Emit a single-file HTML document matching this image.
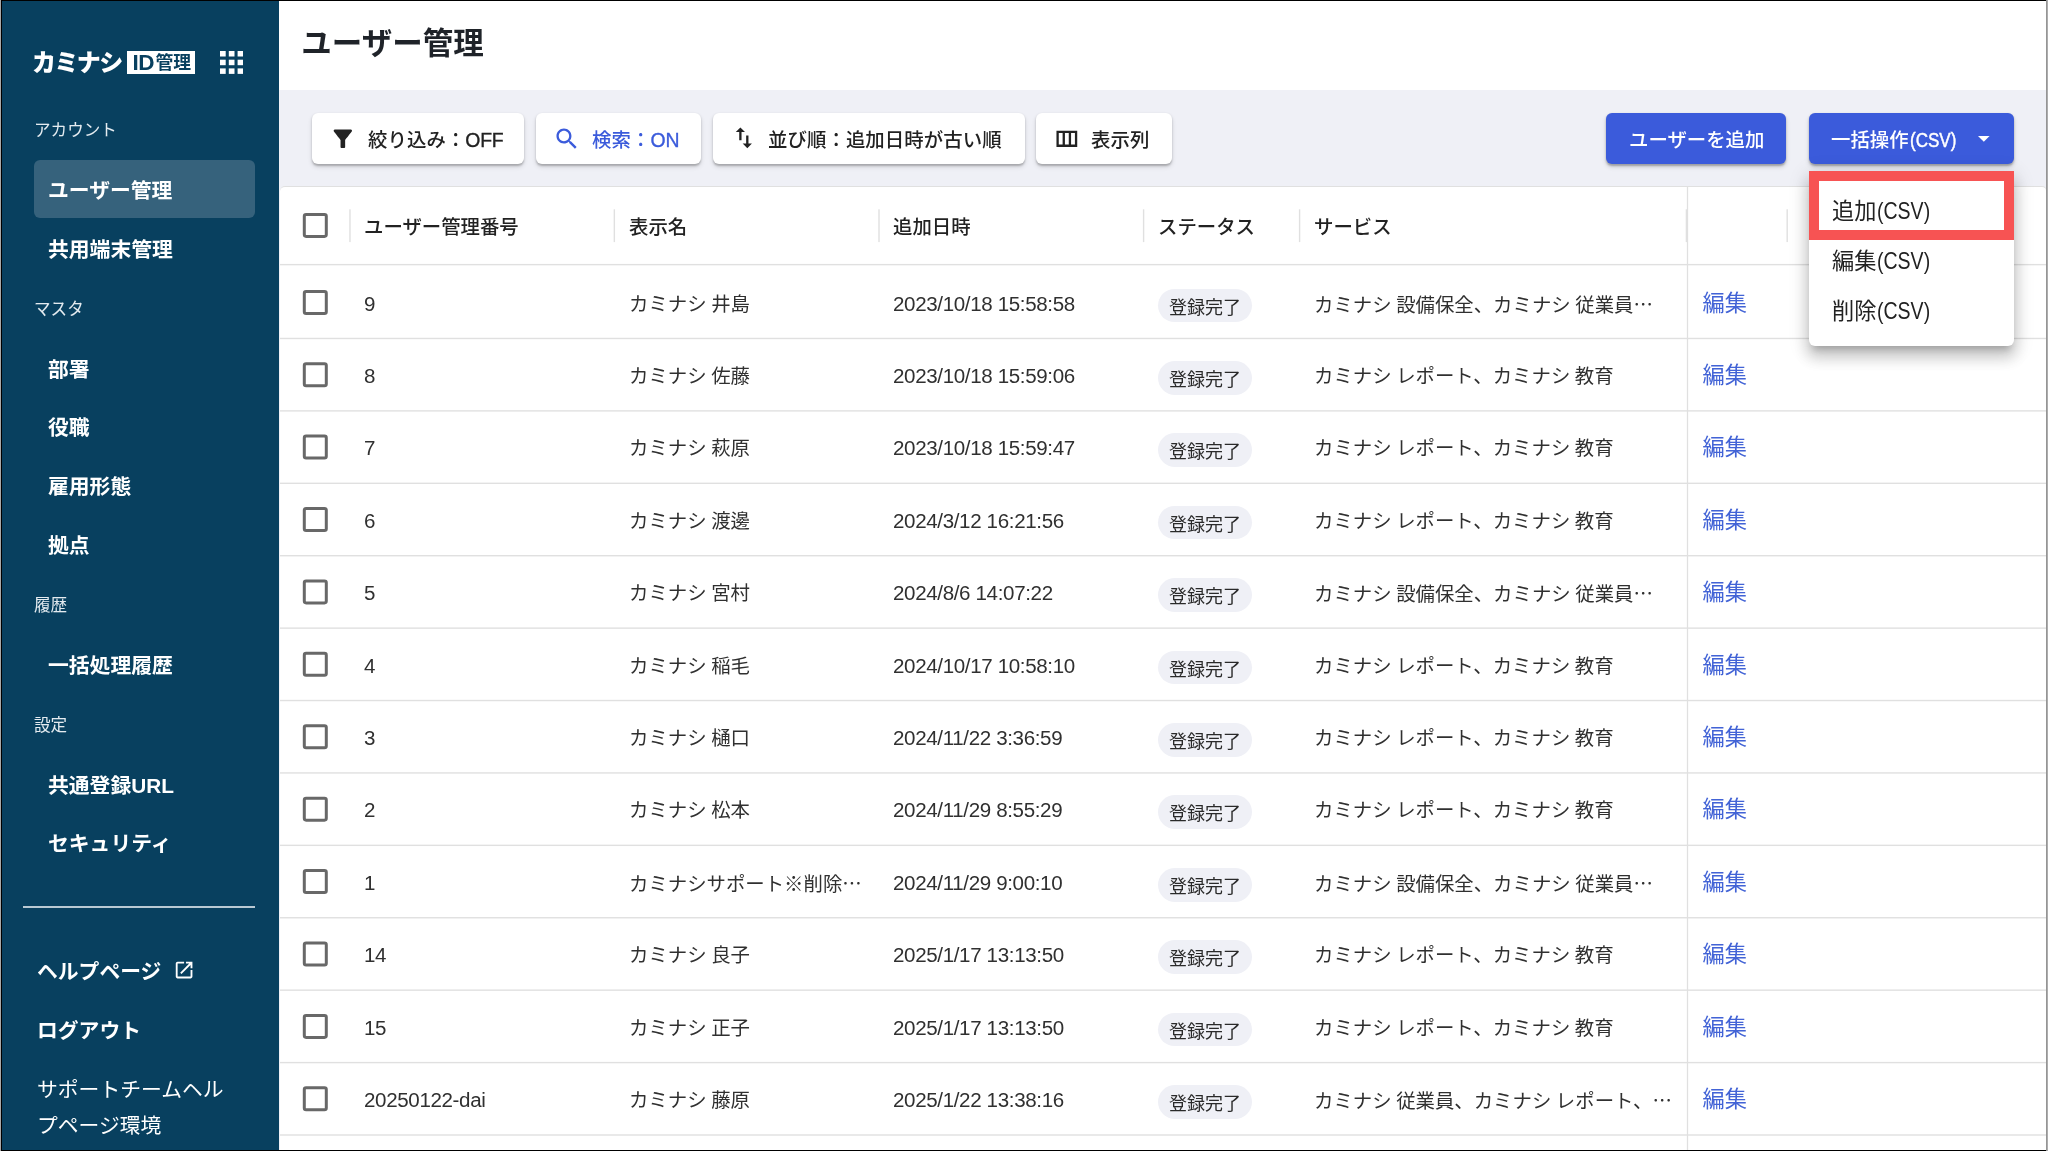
<!DOCTYPE html>
<html lang="ja">
<head>
<meta charset="utf-8">
<title>ユーザー管理</title>
<style>
*{box-sizing:border-box;margin:0;padding:0}
html,body{width:2048px;height:1151px;overflow:hidden;background:#fff}
body{will-change:transform;font-family:"Liberation Sans","Noto Sans CJK JP",sans-serif;color:#222;position:relative}
.abs{position:absolute}
.el{font-family:"Noto Sans CJK JP",sans-serif}
#side{position:absolute;left:0;top:0;width:279px;height:1151px;background:#08405f;color:#fff}
#side .sec{position:absolute;left:34px;font-size:16.6px;line-height:24px;color:#e4ebf0;white-space:nowrap}
#side .item{position:absolute;left:48px;font-size:20.8px;line-height:30px;font-weight:700;white-space:nowrap}
#side .sel{position:absolute;left:34px;top:160px;width:221px;height:58px;border-radius:6px;background:#36627c}
#side .bitem{position:absolute;left:37px;font-size:20.8px;line-height:36px;font-weight:500;white-space:nowrap}
#side .hr{position:absolute;left:23px;top:906px;width:232px;height:2px;background:#b9c9d3}
#main{position:absolute;left:279px;top:0;width:1769px;height:1151px;background:#fff}
#title{position:absolute;left:22.3px;top:21.4px;font-size:30.5px;line-height:44px;font-weight:700;color:#1f2329;white-space:nowrap}
#bar{position:absolute;left:0;top:90px;width:1769px;height:1061px;background:#eff0f6}
.btn{position:absolute;top:113px;height:50.5px;border-radius:6px;background:#fff;box-shadow:0 1.5px 2px rgba(0,0,0,.22),0 3px 5px rgba(0,0,0,.12);font-size:19.4px;line-height:50px;font-weight:500;color:#222;white-space:nowrap}
.btn span.t{position:absolute;top:1.5px;letter-spacing:.08px}
.btn svg{position:absolute}
.pbtn{position:absolute;top:113px;height:50.5px;border-radius:6px;background:#3b5bdb;box-shadow:0 1.5px 2px rgba(0,0,0,.25),0 3px 5px rgba(0,0,0,.14);font-size:19.4px;line-height:50px;font-weight:500;color:#fff;white-space:nowrap}
.pbtn span.t{position:absolute;top:1.7px}
#tbl{position:absolute;left:280px;top:186.4px;width:1766.5px;height:970px;background:#fff;border-top:1.2px solid #e0e0e0;border-right:1px solid #e6e6e6;border-radius:5px 5px 0 0;overflow:hidden}
#tin{position:absolute;left:-280px;top:-187.6px;width:2048px;height:1151px}
.hl{position:absolute;left:280px;width:1766px;height:1.4px;background:#e2e2e2}
.vsep{position:absolute;top:209.3px;width:1.4px;height:32.8px;background:#e0e0e0}
.th{position:absolute;top:188.4px;height:77px;line-height:78px;font-size:19.4px;font-weight:500;color:#222;white-space:nowrap}
.row{position:absolute;left:280px;width:1766px;height:72.41px;font-size:19.4px;line-height:72.41px;color:#303030;white-space:nowrap}
.row span.c{position:absolute;top:1.7px;word-spacing:-.8px}
.row span.n{font-size:20.56px;letter-spacing:-.35px;word-spacing:0}
.cb{position:absolute;left:302.8px;width:25px;height:25px;border:3px solid #6a6a6a;border-radius:3px;background:#fff}
.row .cb{left:22.8px;top:24px}
.chip{position:absolute;left:877.6px;top:22.7px;width:94.7px;height:33.7px;border-radius:17px;background:#eff0f6;font-size:18px;line-height:33.7px;text-align:center;color:#2a2a2a}
.chip span{position:relative;top:3px}
.edit{position:absolute;left:1422.5px;top:-0.5px;font-size:22.2px;color:#4263d6}
#pin{position:absolute;left:1686.85px;top:187px;width:1.3px;height:964px;background:#e0e0e0}
#menu{position:absolute;left:1809px;top:171px;width:205px;height:175px;background:#fff;border-radius:6px;box-shadow:0 7px 7px -4px rgba(0,0,0,.2),0 11px 14px 1.4px rgba(0,0,0,.14),0 4px 19px 3px rgba(0,0,0,.12)}
#menu .mi{position:absolute;left:23px;font-size:22.2px;line-height:32px;color:#222;white-space:nowrap}
#red{position:absolute;left:1809px;top:171px;width:205px;height:69px;border:10px solid #f75353}
.fr{position:absolute}
</style>
</head>
<body>
<div id="main">
  <div id="title">ユーザー管理</div>
  <div id="bar"></div>
</div>
<div id="side">
  <div class="sel"></div>
  <div id="logo" class="abs" style="left:32px;top:45px;font-size:24px;line-height:36px;font-weight:900;letter-spacing:-1.6px;white-space:nowrap">カミナシ</div>
  <div id="idbox" class="abs" style="left:127.3px;top:50.7px;width:68px;height:23px;background:#fff"></div>
  <div id="idtxt" class="abs" style="left:132.5px;top:48px;font-size:17.8px;line-height:28px;font-weight:700;color:#08405f;white-space:nowrap"><span style="font-size:22.5px;letter-spacing:-0.6px;position:relative;top:1px;margin-right:1.6px">ID</span>管理</div>
  <svg class="abs" style="left:220px;top:51px" width="23.4" height="23" viewBox="0 0 23.4 23"><g fill="#fff"><rect x="0" y="0" width="5.7" height="5.5"/><rect x="8.8" y="0" width="5.7" height="5.5"/><rect x="17.6" y="0" width="5.7" height="5.5"/><rect x="0" y="8.700" width="5.7" height="5.5"/><rect x="8.8" y="8.700" width="5.7" height="5.5"/><rect x="17.6" y="8.700" width="5.7" height="5.5"/><rect x="0" y="17.4" width="5.7" height="5.5"/><rect x="8.8" y="17.4" width="5.7" height="5.5"/><rect x="17.6" y="17.4" width="5.7" height="5.5"/></g></svg>
  <div class="sec" style="top:119.3px">アカウント</div>
  <div class="item" style="top:176px">ユーザー管理</div>
  <div class="item" style="top:235px">共用端末管理</div>
  <div class="sec" style="top:298px">マスタ</div>
  <div class="item" style="top:355px">部署</div>
  <div class="item" style="top:413px">役職</div>
  <div class="item" style="top:472px">雇用形態</div>
  <div class="item" style="top:531px">拠点</div>
  <div class="sec" style="top:594px">履歴</div>
  <div class="item" style="top:651px">一括処理履歴</div>
  <div class="sec" style="top:714px">設定</div>
  <div class="item" style="top:771px">共通登録URL</div>
  <div class="item" style="top:829px">セキュリティ</div>
  <div class="hr"></div>
  <div class="bitem" style="top:954px;font-weight:700">ヘルプページ</div>
  <svg class="abs" style="left:172.7px;top:959.2px" width="22.2" height="22.2" viewBox="0 0 24 24"><path fill="#fff" d="M19 19H5V5h7V3H5c-1.11 0-2 .9-2 2v14c0 1.1.89 2 2 2h14c1.1 0 2-.9 2-2v-7h-2v7zM14 3v2h3.59l-9.83 9.83 1.41 1.41L19 6.410V10h2V3h-7z"/></svg>
  <div class="bitem" style="top:1013px;font-weight:700">ログアウト</div>
  <div class="bitem" style="top:1072px;font-weight:400">サポートチームヘル</div>
  <div class="bitem" style="top:1108px;font-weight:400">プページ環境</div>
</div>
<div id="tools">
  <div class="btn" style="left:312px;width:212px"><svg style="left:17.2px;top:11.8px" width="27.7" height="27.7" viewBox="0 0 24 24"><path fill="#222" d="M4.250 5.610C6.270 8.200 10 13 10 13v6c0 .55.45 1 1 1h2c.55 0 1-.45 1-1v-6s3.720-4.800 5.740-7.390c.51-.66.04-1.610-.79-1.610H5.040c-.83 0-1.300.95-.79 1.610z"/></svg><span class="t" style="left:56px">絞り込み：<span style="letter-spacing:-0.3px;-webkit-text-stroke:.35px currentColor">OFF</span></span></div>
  <div class="btn" style="left:536px;width:165px;color:#3b5bdb"><svg style="left:16.5px;top:11.5px" width="27.7" height="27.7" viewBox="0 0 24 24"><path fill="#3b5bdb" d="M15.5 14h-.79l-.28-.27C15.410 12.590 16 11.110 16 9.500 16 5.910 13.090 3 9.500 3S3 5.910 3 9.500 5.910 16 9.500 16c1.610 0 3.090-.59 4.230-1.570l.27.28v.79l5 4.990L20.490 19l-4.990-5zm-6 0C7.010 14 5 11.990 5 9.500S7.010 5 9.500 5 14 7.010 14 9.500 11.990 14 9.500 14z"/></svg><span class="t" style="left:56px">検索：<span style="letter-spacing:0px;-webkit-text-stroke:.35px currentColor">ON</span></span></div>
  <div class="btn" style="left:713px;width:311.7px"><svg style="left:17px;top:11px" width="27.7" height="27.7" viewBox="0 0 24 24"><path fill="#222" d="M16 17.010V10h-2v7.010h-3L15 21l4-3.990h-3zM9 3 5 6.990h3V14h2V6.990h3L9 3z"/></svg><span class="t" style="left:55px">並び順：追加日時が古い順</span></div>
  <div class="btn" style="left:1036px;width:136px"><svg style="left:17px;top:12.2px" width="27.7" height="27.7" viewBox="0 0 24 24"><path fill="#222" d="M3 5v14h18V5H3zm5.330 12H5V7h3.330v10zm5.340 0h-3.330V7h3.330v10zM19 17h-3.330V7H19v10z"/></svg><span class="t" style="left:55px">表示列</span></div>
  <div class="pbtn" style="left:1606px;width:180px"><span class="t" style="left:23px">ユーザーを追加</span></div>
  <div class="pbtn" style="left:1809px;width:205px"><span class="t" style="left:22px">一括操作<span style="display:inline-block;margin-left:1px;font-size:106%;transform:scaleX(0.83);transform-origin:0 50%;-webkit-text-stroke:.45px #fff">(CSV)</span></span><svg class="abs" style="left:169px;top:23.2px" width="11.6" height="5.8" viewBox="0 0 10 5"><path fill="#fff" d="M0 0h10L5 5z"/></svg></div>
</div>
<div id="tbl"><div id="tin">
  <div class="th" style="left:364px">ユーザー管理番号</div>
  <div class="th" style="left:629px">表示名</div>
  <div class="th" style="left:893px">追加日時</div>
  <div class="th" style="left:1158px">ステータス</div>
  <div class="th" style="left:1314px">サービス</div>
  <div class="row" style="top:266.07px"><span class="c n" style="left:84px">9</span><span class="c" style="left:349px">カミナシ 井島</span><span class="c n" style="left:613px">2023/10/18 15:58:58</span><div class="chip"><span>登録完了</span></div><span class="c" style="left:1034px">カミナシ 設備保全、カミナシ 従業員<span class="el">…</span></span><span class="c edit">編集</span></div>
  <div class="row" style="top:338.48px"><span class="c n" style="left:84px">8</span><span class="c" style="left:349px">カミナシ 佐藤</span><span class="c n" style="left:613px">2023/10/18 15:59:06</span><div class="chip"><span>登録完了</span></div><span class="c" style="left:1034px">カミナシ レポート、カミナシ 教育</span><span class="c edit">編集</span></div>
  <div class="row" style="top:410.89px"><span class="c n" style="left:84px">7</span><span class="c" style="left:349px">カミナシ 萩原</span><span class="c n" style="left:613px">2023/10/18 15:59:47</span><div class="chip"><span>登録完了</span></div><span class="c" style="left:1034px">カミナシ レポート、カミナシ 教育</span><span class="c edit">編集</span></div>
  <div class="row" style="top:483.30px"><span class="c n" style="left:84px">6</span><span class="c" style="left:349px">カミナシ 渡邊</span><span class="c n" style="left:613px">2024/3/12 16:21:56</span><div class="chip"><span>登録完了</span></div><span class="c" style="left:1034px">カミナシ レポート、カミナシ 教育</span><span class="c edit">編集</span></div>
  <div class="row" style="top:555.71px"><span class="c n" style="left:84px">5</span><span class="c" style="left:349px">カミナシ 宮村</span><span class="c n" style="left:613px">2024/8/6 14:07:22</span><div class="chip"><span>登録完了</span></div><span class="c" style="left:1034px">カミナシ 設備保全、カミナシ 従業員<span class="el">…</span></span><span class="c edit">編集</span></div>
  <div class="row" style="top:628.12px"><span class="c n" style="left:84px">4</span><span class="c" style="left:349px">カミナシ 稲毛</span><span class="c n" style="left:613px">2024/10/17 10:58:10</span><div class="chip"><span>登録完了</span></div><span class="c" style="left:1034px">カミナシ レポート、カミナシ 教育</span><span class="c edit">編集</span></div>
  <div class="row" style="top:700.53px"><span class="c n" style="left:84px">3</span><span class="c" style="left:349px">カミナシ 樋口</span><span class="c n" style="left:613px">2024/11/22 3:36:59</span><div class="chip"><span>登録完了</span></div><span class="c" style="left:1034px">カミナシ レポート、カミナシ 教育</span><span class="c edit">編集</span></div>
  <div class="row" style="top:772.94px"><span class="c n" style="left:84px">2</span><span class="c" style="left:349px">カミナシ 松本</span><span class="c n" style="left:613px">2024/11/29 8:55:29</span><div class="chip"><span>登録完了</span></div><span class="c" style="left:1034px">カミナシ レポート、カミナシ 教育</span><span class="c edit">編集</span></div>
  <div class="row" style="top:845.35px"><span class="c n" style="left:84px">1</span><span class="c" style="left:349px">カミナシサポート※削除<span class="el">…</span></span><span class="c n" style="left:613px">2024/11/29 9:00:10</span><div class="chip"><span>登録完了</span></div><span class="c" style="left:1034px">カミナシ 設備保全、カミナシ 従業員<span class="el">…</span></span><span class="c edit">編集</span></div>
  <div class="row" style="top:917.76px"><span class="c n" style="left:84px">14</span><span class="c" style="left:349px">カミナシ 良子</span><span class="c n" style="left:613px">2025/1/17 13:13:50</span><div class="chip"><span>登録完了</span></div><span class="c" style="left:1034px">カミナシ レポート、カミナシ 教育</span><span class="c edit">編集</span></div>
  <div class="row" style="top:990.17px"><span class="c n" style="left:84px">15</span><span class="c" style="left:349px">カミナシ 正子</span><span class="c n" style="left:613px">2025/1/17 13:13:50</span><div class="chip"><span>登録完了</span></div><span class="c" style="left:1034px">カミナシ レポート、カミナシ 教育</span><span class="c edit">編集</span></div>
  <div class="row" style="top:1062.58px"><span class="c n" style="left:84px">20250122-dai</span><span class="c" style="left:349px">カミナシ 藤原</span><span class="c n" style="left:613px">2025/1/22 13:38:16</span><div class="chip"><span>登録完了</span></div><span class="c" style="left:1034px">カミナシ 従業員、カミナシ レポート、<span class="el">…</span></span><span class="c edit">編集</span></div>
<svg class="abs" style="left:0;top:0" width="2048" height="1151" viewBox="0 0 2048 1151">
<rect x="304.3" y="214.40" width="22" height="22" rx="1.8" fill="#fff" stroke="#686868" stroke-width="3"/>
<rect x="349.26" y="209.3" width="1.4" height="32.8" fill="#e0e0e0"/>
<rect x="613.65" y="209.3" width="1.4" height="32.8" fill="#e0e0e0"/>
<rect x="878.30" y="209.3" width="1.4" height="32.8" fill="#e0e0e0"/>
<rect x="1142.90" y="209.3" width="1.4" height="32.8" fill="#e0e0e0"/>
<rect x="1298.90" y="209.3" width="1.4" height="32.8" fill="#e0e0e0"/>
<rect x="1685.70" y="209.3" width="1.4" height="32.8" fill="#e0e0e0"/>
<rect x="1786.50" y="209.3" width="1.4" height="32.8" fill="#e0e0e0"/>
<rect x="280" y="263.92" width="1766" height="1.4" fill="#e0e0e0"/>
<rect x="280" y="337.78" width="1766" height="1.4" fill="#e0e0e0"/>
<rect x="304.3" y="291.62" width="22" height="22" rx="1.8" fill="#fff" stroke="#686868" stroke-width="3"/>
<rect x="280" y="410.19" width="1766" height="1.4" fill="#e0e0e0"/>
<rect x="304.3" y="363.69" width="22" height="22" rx="1.8" fill="#fff" stroke="#686868" stroke-width="3"/>
<rect x="280" y="482.60" width="1766" height="1.4" fill="#e0e0e0"/>
<rect x="304.3" y="436.10" width="22" height="22" rx="1.8" fill="#fff" stroke="#686868" stroke-width="3"/>
<rect x="280" y="555.01" width="1766" height="1.4" fill="#e0e0e0"/>
<rect x="304.3" y="508.51" width="22" height="22" rx="1.8" fill="#fff" stroke="#686868" stroke-width="3"/>
<rect x="280" y="627.42" width="1766" height="1.4" fill="#e0e0e0"/>
<rect x="304.3" y="580.91" width="22" height="22" rx="1.8" fill="#fff" stroke="#686868" stroke-width="3"/>
<rect x="280" y="699.83" width="1766" height="1.4" fill="#e0e0e0"/>
<rect x="304.3" y="653.33" width="22" height="22" rx="1.8" fill="#fff" stroke="#686868" stroke-width="3"/>
<rect x="280" y="772.24" width="1766" height="1.4" fill="#e0e0e0"/>
<rect x="304.3" y="725.74" width="22" height="22" rx="1.8" fill="#fff" stroke="#686868" stroke-width="3"/>
<rect x="280" y="844.65" width="1766" height="1.4" fill="#e0e0e0"/>
<rect x="304.3" y="798.14" width="22" height="22" rx="1.8" fill="#fff" stroke="#686868" stroke-width="3"/>
<rect x="280" y="917.06" width="1766" height="1.4" fill="#e0e0e0"/>
<rect x="304.3" y="870.56" width="22" height="22" rx="1.8" fill="#fff" stroke="#686868" stroke-width="3"/>
<rect x="280" y="989.47" width="1766" height="1.4" fill="#e0e0e0"/>
<rect x="304.3" y="942.96" width="22" height="22" rx="1.8" fill="#fff" stroke="#686868" stroke-width="3"/>
<rect x="280" y="1061.88" width="1766" height="1.4" fill="#e0e0e0"/>
<rect x="304.3" y="1015.38" width="22" height="22" rx="1.8" fill="#fff" stroke="#686868" stroke-width="3"/>
<rect x="280" y="1134.29" width="1766" height="1.4" fill="#e0e0e0"/>
<rect x="304.3" y="1087.78" width="22" height="22" rx="1.8" fill="#fff" stroke="#686868" stroke-width="3"/>
<rect x="1686.85" y="187" width="1.3" height="964" fill="#e0e0e0"/>
</svg>
</div></div>
<div id="menu">
  <div class="mi" style="top:24.4px">追加<span style="display:inline-block;margin-left:1px;font-size:106%;transform:scaleX(0.83);transform-origin:0 50%;">(CSV)</span></div>
  <div class="mi" style="top:74.4px">編集<span style="display:inline-block;margin-left:1px;font-size:106%;transform:scaleX(0.83);transform-origin:0 50%;">(CSV)</span></div>
  <div class="mi" style="top:124.4px">削除<span style="display:inline-block;margin-left:1px;font-size:106%;transform:scaleX(0.83);transform-origin:0 50%;">(CSV)</span></div>
</div>
<div id="red"></div>
<div id="frame">
  <div class="fr" style="left:0;top:0;width:2048px;height:1px;background:#000"></div>
  <div class="fr" style="left:0;top:1149.7px;width:2048px;height:1.3px;background:#000"></div>
  <div class="fr" style="left:1px;top:0;width:1.1px;height:1151px;background:#000"></div>
  <div class="fr" style="left:0;top:0;width:1px;height:1151px;background:#a8a8a8"></div>
  <div class="fr" style="left:2046px;top:0;width:1px;height:1151px;background:#959595"></div>
  <div class="fr" style="left:2047px;top:0;width:1px;height:1151px;background:#adadad"></div>
</div>
</body>
</html>
